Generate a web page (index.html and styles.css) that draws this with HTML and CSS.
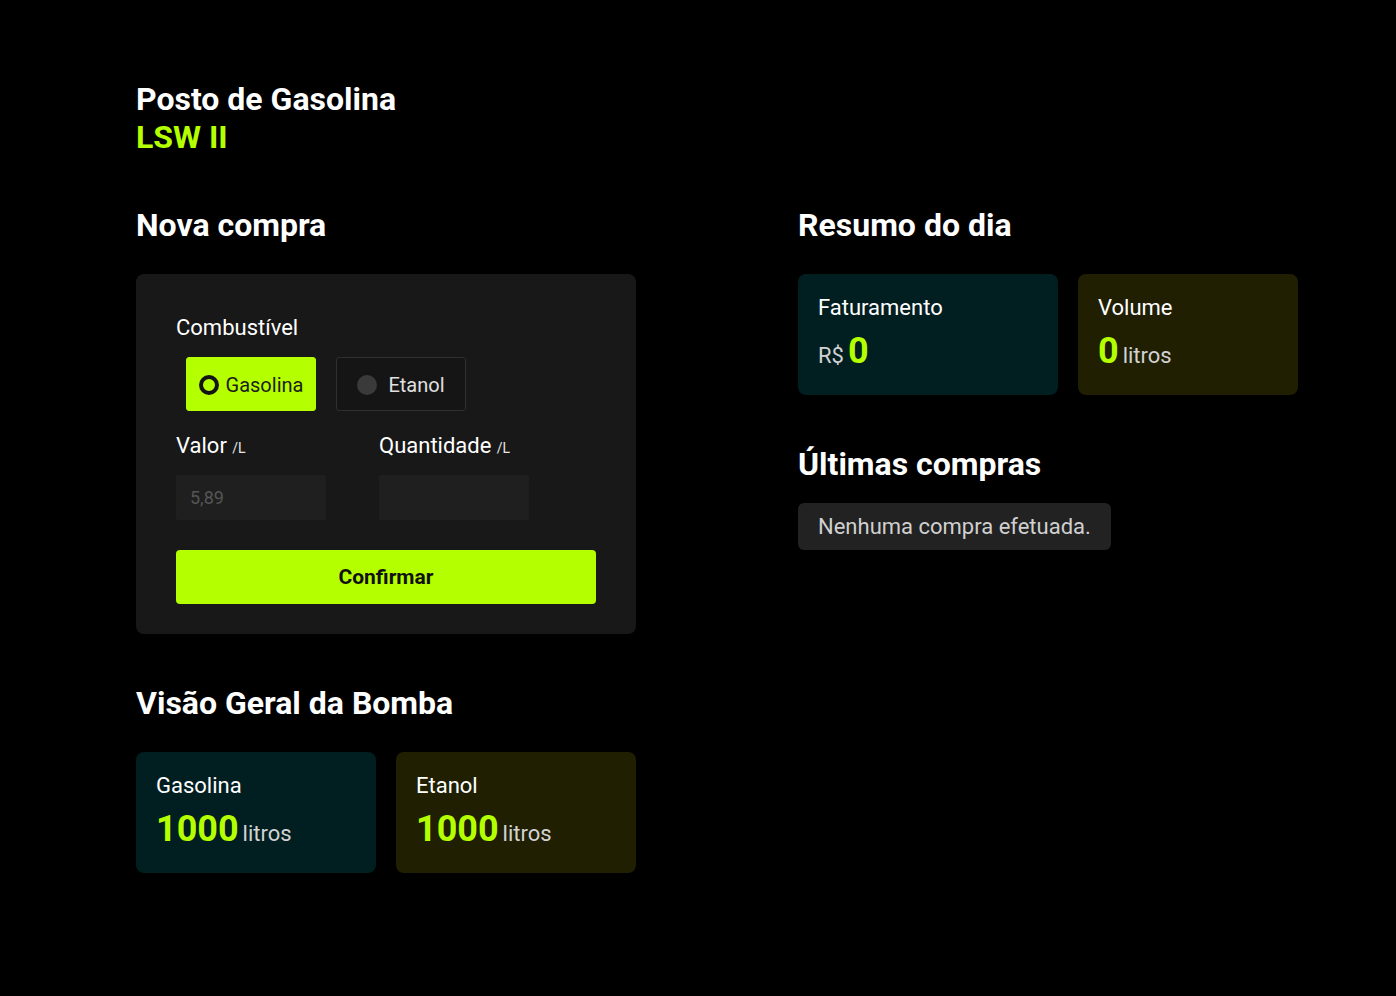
FILE: index.html
```html
<!DOCTYPE html>
<html lang="pt-BR">
<head>
<meta charset="utf-8">
<title>Posto de Gasolina LSW II</title>
<link rel="stylesheet" href="styles.css">
</head>
<body>
<main class="page">
  <header class="brand">
    <h1 class="brand-title">
      <span class="brand-line">Posto de Gasolina</span>
      <span class="brand-line brand-accent">LSW II</span>
    </h1>
  </header>

  <div class="columns">
    <div class="column">
      <section class="section">
        <h2 class="section-title">Nova compra</h2>
        <form class="purchase-card">
          <p class="field-label">Combustível</p>
          <div class="fuel-options">
            <label class="fuel-option fuel-option--checked">
              <span class="radio radio--checked"></span>
              <span class="fuel-name">Gasolina</span>
            </label>
            <label class="fuel-option">
              <span class="radio"></span>
              <span class="fuel-name">Etanol</span>
            </label>
          </div>
          <div class="inputs-row">
            <div class="input-group">
              <p class="field-label">Valor <small class="unit">/L</small></p>
              <input class="text-input" type="text" placeholder="5,89" disabled>
            </div>
            <div class="input-group">
              <p class="field-label">Quantidade <small class="unit">/L</small></p>
              <input class="text-input" type="text">
            </div>
          </div>
          <button class="confirm-button" type="button">Confirmar</button>
        </form>
      </section>

      <section class="section section--spaced">
        <h2 class="section-title">Visão Geral da Bomba</h2>
        <div class="stat-grid stat-grid--even">
          <div class="stat-card stat-card--teal">
            <p class="stat-label">Gasolina</p>
            <p class="stat-value"><strong class="stat-number">1000</strong> <span class="stat-unit">litros</span></p>
          </div>
          <div class="stat-card stat-card--olive">
            <p class="stat-label">Etanol</p>
            <p class="stat-value"><strong class="stat-number">1000</strong> <span class="stat-unit">litros</span></p>
          </div>
        </div>
      </section>
    </div>

    <div class="column">
      <section class="section">
        <h2 class="section-title">Resumo do dia</h2>
        <div class="stat-grid stat-grid--summary">
          <div class="stat-card stat-card--teal">
            <p class="stat-label">Faturamento</p>
            <p class="stat-value"><span class="stat-unit">R$</span> <strong class="stat-number">0</strong></p>
          </div>
          <div class="stat-card stat-card--olive">
            <p class="stat-label">Volume</p>
            <p class="stat-value"><strong class="stat-number">0</strong> <span class="stat-unit">litros</span></p>
          </div>
        </div>
      </section>

      <section class="section section--spaced">
        <h2 class="section-title section-title--tight">Últimas compras</h2>
        <div class="empty-box">Nenhuma compra efetuada.</div>
      </section>
    </div>
  </div>
</main>
</body>
</html>
```

FILE: styles.css
```css
* {
  box-sizing: border-box;
}

html,
body {
  margin: 0;
  padding: 0;
  background: #000;
}

body {
  font-family: Roboto, "Liberation Sans", Arial, sans-serif;
  color: #fff;
}

.page {
  padding: 80px 0 80px 136px;
}

.brand-title {
  margin: 0 0 50px;
  font-size: 32px;
  font-weight: 700;
  line-height: normal;
  color: #fff;
}

.brand-line {
  display: block;
}

.brand-accent {
  color: #b4ff00;
}

.columns {
  display: grid;
  grid-template-columns: 500px 500px;
  column-gap: 162px;
  align-items: start;
}

.column {
  display: flex;
  flex-direction: column;
}

.section--spaced {
  margin-top: 50px;
}

.section-title {
  margin: 0 0 30px;
  font-size: 32px;
  font-weight: 700;
  line-height: normal;
  color: #fff;
}

.section-title--tight {
  margin-bottom: 20px;
}

/* Purchase form */
.purchase-card {
  background: #181818;
  border-radius: 8px;
  padding: 41px 40px 30px;
  display: flex;
  flex-direction: column;
}

.field-label {
  margin: 0;
  font-size: 22px;
  line-height: normal;
  color: #fff;
}

.unit {
  font-size: 14px;
  color: #e6e6e6;
}

.fuel-options {
  display: flex;
  margin-top: 17px;
}

.fuel-option {
  width: 130px;
  height: 54px;
  margin: 0 10px;
  border-radius: 3px;
  border: 1px solid #2f2f2f;
  background: #151515;
  display: flex;
  align-items: center;
  justify-content: center;
  gap: 11px;
  padding-top: 1px;
  font-size: 20px;
  color: #e0e0e0;
}

.fuel-option--checked {
  background: #b4ff00;
  border-color: #b4ff00;
  color: #1c1c1c;
  gap: 7px;
}

.radio {
  width: 20px;
  height: 20px;
  border-radius: 50%;
  background: #3a3a3a;
  flex: none;
}

.radio--checked {
  background: transparent;
  border: 4px solid #141414;
}

.inputs-row {
  display: flex;
  gap: 53px;
  margin-top: 22px;
}

.input-group {
  display: flex;
  flex-direction: column;
  gap: 17px;
  width: 150px;
}

.text-input {
  width: 150px;
  height: 45px;
  border: none;
  border-radius: 2px;
  background: #1f1f1f;
  padding: 0 14px;
  font-family: inherit;
  font-size: 18px;
  color: #ddd;
  outline: none;
}

.text-input::placeholder {
  color: #555;
}

.confirm-button {
  margin-top: 30px;
  height: 54px;
  width: 100%;
  border: none;
  border-radius: 4px;
  background: #b4ff00;
  font-family: inherit;
  font-size: 21px;
  font-weight: 700;
  color: #111;
}

/* Stat cards */
.stat-grid {
  display: grid;
  column-gap: 20px;
}

.stat-grid--even {
  grid-template-columns: 240px 240px;
}

.stat-grid--summary {
  grid-template-columns: 260px 220px;
}

.stat-card {
  border-radius: 8px;
  padding: 21px 20px 20px;
  height: 121px;
  display: flex;
  flex-direction: column;
  gap: 10px;
}

.stat-card--teal {
  background: #011e21;
}

.stat-card--olive {
  background: #201f02;
}

.stat-label {
  margin: 0;
  font-size: 22px;
  line-height: normal;
  color: #fff;
}

.stat-value {
  margin: 0;
  line-height: normal;
}

.stat-number {
  font-size: 36px;
  font-weight: 700;
  color: #b4ff00;
}

.stat-unit {
  font-size: 22px;
  color: #d2d2d2;
}

/* Empty list */
.empty-box {
  width: fit-content;
  background: #222;
  border-radius: 6px;
  padding: 0 20px;
  height: 47px;
  display: flex;
  align-items: center;
  font-size: 22px;
  color: #d0d0d0;
}
```
